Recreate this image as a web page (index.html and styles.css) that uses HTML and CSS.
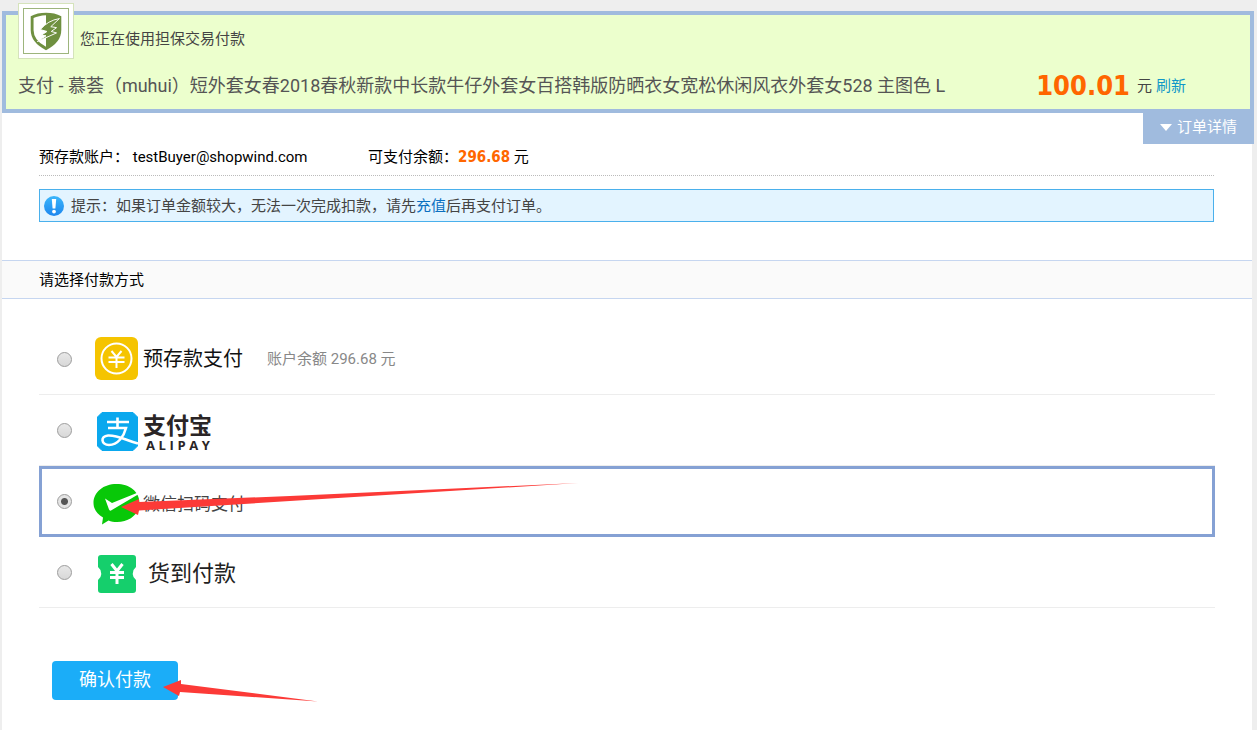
FILE: index.html
```
<!DOCTYPE html>
<html lang="zh-CN">
<head>
<meta charset="utf-8">
<title>支付</title>
<link rel="stylesheet" href="styles.css">
</head>
<body>
<main class="page">
  <header class="order">
    <div class="order-top">
      <span class="badge">
        <svg viewBox="0 0 46 46" width="46" height="46" aria-hidden="true">
          <path d="M23 4 Q32 4 39 7.500 V22 Q39 35 23 43 Q7 35 7 22 V7.500 Q14 4 23 4 Z" fill="#6f9040"/>
          <path d="M23 6.500 Q15 7 10 9.500 V22 Q10 33 23 39.500 Z" fill="#fff"/>
          <path d="M37 10 Q25 12 17 21.500 L24 23.500 L18 27.500 L23 28 L14 34 L34 25 L28.500 23.500 L34 19.500 L28 18.500 Z" fill="#6f9040" stroke="#fff" stroke-width="1"/>
        </svg>
      </span>
      <p class="secure">您正在使用担保交易付款</p>
    </div>
    <div class="order-main">
      <h1 class="title">支付 - 慕荟（muhui）短外套女春2018春秋新款中长款牛仔外套女百搭韩版防晒衣女宽松休闲风衣外套女528 主图色 L</h1>
      <p class="amount"><strong class="price">100.01</strong> 元 <a class="refresh" href="#">刷新</a></p>
    </div>
    <button class="detail" type="button"><span class="caret"></span>订单详情</button>
  </header>

  <section class="account">
    <p class="account-row">
      <span class="account-name">预存款账户： testBuyer@shopwind.com</span>
      <span>可支付余额：<strong class="balance">296.68</strong> 元</span>
    </p>
    <p class="notice">
      <svg class="notice-icon" viewBox="0 0 20 20" width="20" height="20" aria-hidden="true">
        <defs><linearGradient id="info" x1="0" y1="0" x2="0" y2="1"><stop offset="0" stop-color="#3bb6fb"/><stop offset="1" stop-color="#1c86ee"/></linearGradient></defs>
        <circle cx="10" cy="10" r="10" fill="url(#info)"/>
        <path d="M7.8 3 H12.2 L11.4 12.5 H8.6 Z" fill="#fff"/>
        <circle cx="10" cy="15.6" r="1.9" fill="#fff"/>
      </svg>
      <span>提示：如果订单金额较大，无法一次完成扣款，请先<a class="recharge" href="#">充值</a>后再支付订单。</span>
    </p>
  </section>

  <h2 class="section-title">请选择付款方式</h2>

  <form class="pay">
    <div class="option">
      <input class="radio" type="radio" name="pay" id="deposit">
      <label class="method" for="deposit">
        <svg class="logo" viewBox="0 0 48 48" width="48" height="48" aria-hidden="true">
          <rect x="2" y="2" width="43" height="43" rx="6" fill="#f5c400"/>
          <circle cx="23.5" cy="23.5" r="15" fill="none" stroke="#fff" stroke-width="2"/>
          <path d="M18.5 16 L23.5 22 L28.5 16 M15.5 22.5 H31.5 M15.5 27 H31.5 M23.5 22 V33" fill="none" stroke="#fff" stroke-width="2"/>
        </svg>
        <span class="name-deposit">预存款支付</span>
      </label>
      <span class="remain">账户余额 296.68 元</span>
    </div>
    <div class="option">
      <input class="radio" type="radio" name="pay" id="alipay">
      <label class="method" for="alipay">
        <svg class="logo" viewBox="0 0 48 48" width="48" height="48" aria-hidden="true">
          <path d="M9 6.500 H40 L44.500 11 V40 L40 44.500 H9 L4.500 40 V11 Z" fill="#0aa8ee" stroke="#0aa8ee" stroke-linejoin="round"/>
          <path d="M14 16 H36 M24.5 11.500 V22 M15 22 H33 C31 30 25 39 16 39 C8 39 7 30 15 29.500 C25 29 32 34 45 37.500" fill="none" stroke="#fff" stroke-width="2.6"/>
        </svg>
        <span class="alipay-name">
          <span class="alipay-cn">支付宝</span>
          <span class="alipay-en"><span>A</span><span>L</span><span>I</span><span>P</span><span>A</span><span>Y</span></span>
        </span>
      </label>
    </div>
    <div class="option selected">
      <input class="radio" type="radio" name="pay" id="wechat" checked>
      <label class="method" for="wechat">
        <svg class="logo" viewBox="0 0 48 48" width="48" height="48" aria-hidden="true">
          <path d="M23.500 6 C36.500 6 46.500 13.500 46.500 25 C46.500 36 36.500 44 24 44 C21 44 18 43.500 15.500 42.500 L9 46.500 L10 39.500 C4 36 .5 31 .5 25 C.5 14 10.500 6 23.500 6 Z" fill="#08c808"/>
          <path d="M12 20.500 L19 25 L45 14.500 V16.500 L18 32.500 Q16.500 33 16 31.500 Z" fill="#fff"/>
        </svg>
        <span class="name-wechat">微信扫码支付</span>
      </label>
      <svg class="arrow arrow-wechat" viewBox="0 0 460 34" width="460" height="34" aria-hidden="true">
        <path d="M1 25 L19 17 V20 L170 14 L458 1 L170 19 L19 28.500 L18 33 Z" fill="#fc3a37"/>
      </svg>
    </div>
    <div class="option">
      <input class="radio" type="radio" name="pay" id="cod">
      <label class="method" for="cod">
        <svg class="logo" viewBox="0 0 48 48" width="48" height="48" aria-hidden="true">
          <path d="M8 7 H40 Q43 7 43 10 V19 L40.500 22 Q39 26 40.500 29 L43 32 V42 Q43 45 40 45 H8 Q5 45 5 42 V32 L7.500 29 Q9 26 7.500 22 L5 19 V10 Q5 7 8 7 Z" fill="#15cf6c"/>
          <path d="M18.500 16 L24 23 L29.500 16 M17 24.500 H31 M17 29.500 H31 M24 23 V36" fill="none" stroke="#fff" stroke-width="3"/>
        </svg>
        <span class="name-cod">货到付款</span>
      </label>
    </div>
    <div class="actions">
      <button class="confirm" type="submit">确认付款</button>
      <svg class="arrow arrow-confirm" viewBox="0 0 158 24" width="158" height="24" aria-hidden="true">
        <path d="M1 8 L19 1 V5 L156 22.500 L18 13 L17 17 Z" fill="#fc3a37"/>
      </svg>
    </div>
  </form>
</main>
</body>
</html>
```
FILE: styles.css
```
* { box-sizing: border-box; }
html { background: #eee; }
body {
  margin: 0;
  min-height: 100vh;
  padding: 11px 5px 0 2px;
  display: flex;
  font: 15px/20px Roboto, "Noto Sans CJK SC", sans-serif;
  color: #000;
}
p, h1, h2 { margin: 0; font-weight: 400; }
a { text-decoration: none; }
button, input { font-family: inherit; }

.page { flex: 1; min-width: 0; background: #fff; }

.order {
  position: relative;
  margin-right: -2px;
  border: 4px solid #a0bbde;
  background: #ecffcd;
  padding: 0 64px 8px 12px;
  color: #444;
}
.order-top { display: flex; gap: 6px; }
.badge {
  margin-top: -12px;
  padding: 4px;
  border: 1px solid #d5e3bb;
  background: #fff;
  display: flex;
}
.badge svg { border: 1px solid #9db57c; }
.secure { padding-top: 14px; }
.order-main { display: flex; align-items: center; justify-content: space-between; gap: 12px; padding-top: 12px; }
.title { font-size: 18px; line-height: 30px; color: #555; }
.amount { display: flex; align-items: center; gap: 4px; line-height: 30px; white-space: nowrap; }
.price { font: bold 27px/30px "DejaVu Sans Condensed", "DejaVu Sans", sans-serif; color: #f60; margin-right: 3px; }
.refresh { color: #0f97c8; }
.detail {
  position: absolute;
  top: 100%;
  right: -4px;
  display: flex;
  align-items: center;
  gap: 5px;
  padding: 8px 17px 7px;
  border: 0;
  background: #a0bbde;
  color: #fff;
  font-size: 15px;
  line-height: 20px;
}
.caret { border: 6px solid transparent; border-top: 7px solid #fff; border-bottom: 0; }

.account { padding: 34px 38px 38px 37px; }
.account-row { display: flex; padding-bottom: 8px; border-bottom: 1px dotted #bbb; }
.account-name { width: 329px; }
.balance { font-family: "DejaVu Sans Condensed", "DejaVu Sans", sans-serif; color: #f60; }
.notice {
  display: flex;
  align-items: center;
  gap: 7px;
  margin-top: 13px;
  padding: 6px 4px 5px;
  border: 1px solid #4ab0ec;
  background: #e3f4ff;
  color: #444;
}
.recharge { color: #0a6fc0; }

.section-title {
  padding: 10px 37px 8px;
  border: 1px solid #c6d6f0;
  border-width: 1px 0;
  background: #fafafa;
  font-size: 15px;
  line-height: 19px;
}

.pay { padding: 25px 37px 30px; }
.option {
  position: relative;
  display: flex;
  align-items: center;
  height: 71px;
  padding: 0 18px;
  border-bottom: 1px solid #ededed;
}
.option.selected { padding: 0 15px; border: 3px solid #85a1d4; }
.radio {
  appearance: none;
  width: 15px;
  height: 15px;
  margin: 0 21px 0 0;
  border: 1px solid #9c9c9c;
  border-radius: 50%;
  background: linear-gradient(#e8e8e8, #d8d8d8);
}
.radio:checked { background: radial-gradient(circle, #555 0 3px, #e4e4e4 4px); }
.method { display: flex; align-items: center; gap: 2px; }
.logo { flex: none; }
.name-deposit { font-size: 20px; line-height: 28px; color: #111; }
.alipay-name { display: flex; flex-direction: column; width: 69px; padding-top: 6px; color: #2a2526; font-weight: 700; }
.alipay-cn { font-size: 23px; line-height: 24px; }
.alipay-en { display: flex; justify-content: space-between; padding: 0 2px 0 3px; font: bold 13px/13px "Open Sans", sans-serif; }
.name-wechat { padding-top: 5px; font-size: 17px; color: #444; }
.name-cod { padding: 4px 0 0 5px; font-size: 22px; color: #222; }
.remain { margin-left: 24px; color: #888; }

.arrow { position: absolute; pointer-events: none; }
.arrow-wechat { left: 78px; top: 13px; }
.actions { position: relative; padding: 53px 13px 0; }
.confirm {
  padding: 7px 27px 8px;
  border: 0;
  border-radius: 4px;
  background: #1badf8;
  color: #fff;
  font-size: 18px;
  line-height: 24px;
}
.arrow-confirm { left: 123px; top: 71px; }
```
